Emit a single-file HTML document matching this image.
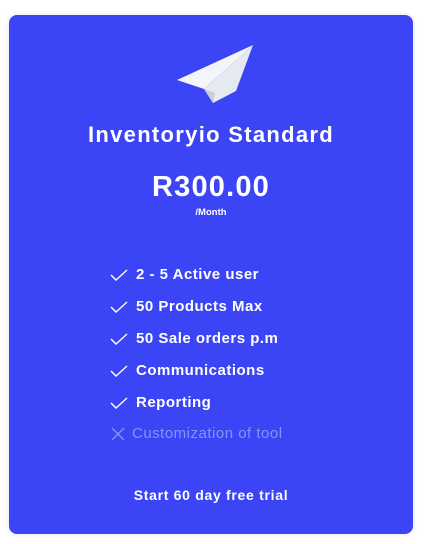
<!DOCTYPE html><html><head><style>
body{margin:0;width:426px;height:544px;background:#fff;font-family:"Liberation Sans",sans-serif;position:relative;overflow:hidden}
.card{position:absolute;left:9px;top:15px;width:404px;height:519px;background:#3c45f6;border-radius:8px;box-shadow:0 0 6px rgba(0,0,0,.12);color:#fff}
.t{position:absolute;width:100%;text-align:center;font-weight:bold}
.li{position:absolute;left:101px;font-size:15px;letter-spacing:0.5px;font-weight:bold;display:flex;align-items:center}
.li svg{margin-right:8px}
</style></head><body><div class="card">
<svg style="position:absolute;left:167px;top:28px" width="80" height="62" viewBox="0 0 80 62">
<polygon points="1,37 77,2 28,46" fill="#f4f5fb"/>
<polygon points="77,2 28,46 37,60 60,48" fill="#e6e8f2"/>
<polygon points="28,46 37,60 39,50" fill="#c9ccdb"/>
</svg>
<div class="t" style="top:107px;font-size:22px;letter-spacing:1.3px">Inventoryio Standard</div>
<div class="t" style="top:156px;font-size:29px;letter-spacing:1.2px">R300.00</div>
<div class="t" style="top:192px;font-size:9.5px">/Month</div>
<div class="li" style="top:251px"><svg width="18" height="12"><path d="M1 6l5 5 11-10" stroke="#fff" stroke-width="1.4" fill="none"/></svg>2 - 5 Active user</div>
<div class="li" style="top:283px"><svg width="18" height="12"><path d="M1 6l5 5 11-10" stroke="#fff" stroke-width="1.4" fill="none"/></svg>50 Products Max</div>
<div class="li" style="top:315px"><svg width="18" height="12"><path d="M1 6l5 5 11-10" stroke="#fff" stroke-width="1.4" fill="none"/></svg>50 Sale orders p.m</div>
<div class="li" style="top:347px"><svg width="18" height="12"><path d="M1 6l5 5 11-10" stroke="#fff" stroke-width="1.4" fill="none"/></svg>Communications</div>
<div class="li" style="top:379px"><svg width="18" height="12"><path d="M1 6l5 5 11-10" stroke="#fff" stroke-width="1.4" fill="none"/></svg>Reporting</div>
<div class="li" style="top:410px;font-weight:normal;color:#8a91f5"><svg width="16" height="14" style="margin-right:6px"><path d="M2 1l12 12M14 1L2 13" stroke="#8a91f5" stroke-width="1.4"/></svg>Customization of tool</div>
<div class="t" style="top:472px;font-size:14px;letter-spacing:0.7px">Start 60 day free trial</div>
</div></body></html>
